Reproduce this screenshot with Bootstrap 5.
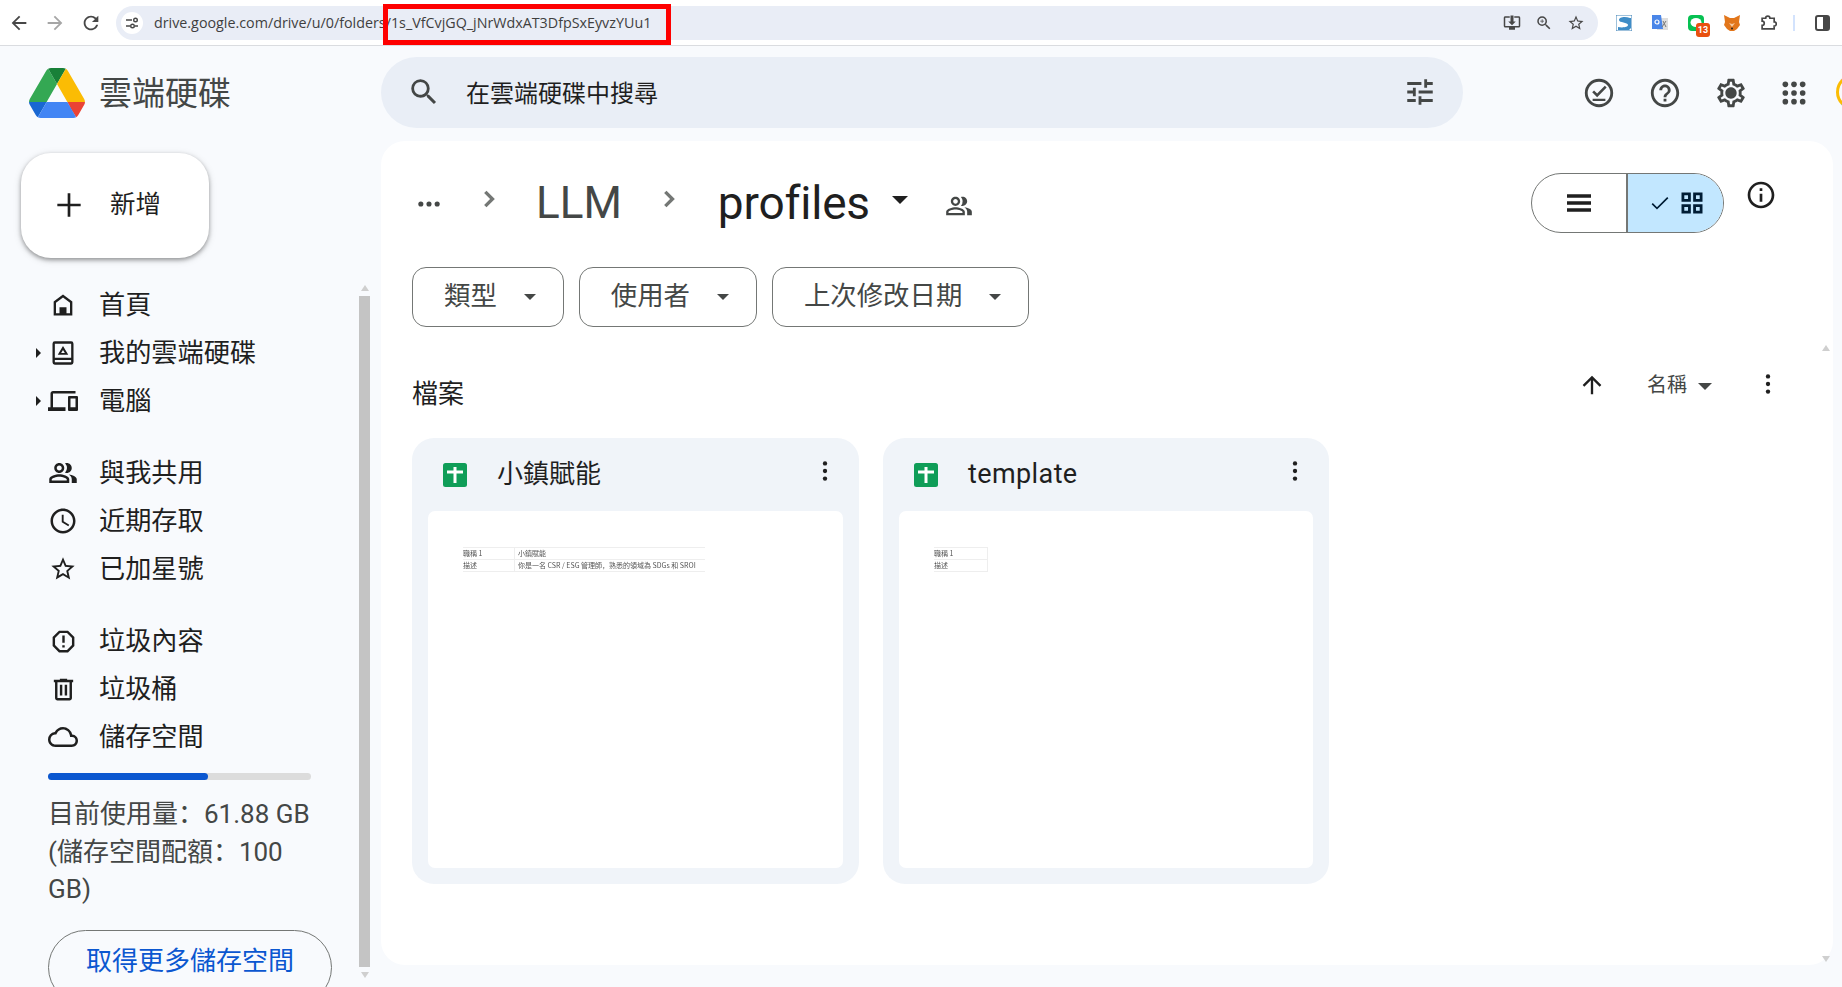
<!DOCTYPE html>
<html lang="en">
<head>
    <meta charset="UTF-8">
    <title>profiles - Google 雲端硬碟</title>
    <link href="https://cdn.jsdelivr.net/npm/bootstrap@5.3.0/dist/css/bootstrap.min.css" rel="stylesheet">
    <style>
        html, body {
            height: 987px;
            overflow: hidden;
        }
        body {
            background-color: #f8fafd;
            color: #1f1f1f;
            font-family: Roboto, "Noto Sans CJK SC", sans-serif;
            font-size: 26px;
        }
        svg {
            display: block;
            flex: none;
            fill: currentColor;
        }
        .chrome-bar {
            height: 46px;
            background: #fff;
            border-bottom: 1px solid #dadce0;
            color: #474747;
        }
        .nav-arrows {
            gap: 14px;
        }
        .arrow-off {
            color: #a6a6a6;
        }
        .omni {
            position: relative;
            width: 1482px;
            height: 34px;
            margin-left: 14px;
            border-radius: 17px;
            background: #e9edf6;
        }
        .omni-site {
            width: 22px;
            height: 22px;
            margin: 0 11px 0 5px;
            border-radius: 50%;
            background: #fff;
        }
        .site-glyph {
            fill: none;
            stroke: #474747;
            stroke-width: 1.4;
        }
        .omni-url {
            font-family: "Open Sans", sans-serif;
            font-size: 14.3px;
            color: #3f3f3f;
            white-space: nowrap;
        }
        .red-frame {
            position: absolute;
            left: 267px;
            top: -2px;
            width: 288px;
            height: 41px;
            border: 5px solid #fe0000;
        }
        .omni-tools {
            gap: 14px;
            margin-right: 13px;
        }
        .ext-row {
            gap: 20px;
            margin-left: 18px;
        }
        .ext-slot {
            position: relative;
            width: 16px;
            height: 16px;
        }
        .ext-badge {
            position: absolute;
            left: 8px;
            top: 8px;
            width: 14px;
            height: 14px;
            border-radius: 3px;
            background: #e8500f;
            color: #fff;
            font-size: 9px;
            font-weight: 700;
            line-height: 14px;
            text-align: center;
        }
        .ext-line {
            fill: #06c152;
        }
        .ext-fox {
            fill: #e2761b;
        }
        .ext-puzzle {
            fill: none;
            stroke: #474747;
            stroke-width: 2.4;
        }
        .ext-sep {
            width: 2px;
            height: 16px;
            margin-left: -4px;
            background: #d3e3fd;
        }
        .ext-plain {
            fill: none;
        }
        .drive-head {
            height: 95px;
            padding-bottom: 3px;
        }
        .brand {
            width: 381px;
            padding-left: 29px;
            color: #444746;
            font-size: 33px;
            gap: 14px;
        }
        .brand-logo {
            margin-top: 1px;
        }
        .brand-name {
            margin-top: 4px;
        }
        .search-box {
            width: 1082px;
            height: 71px;
            padding: 0 26px;
            border-radius: 36px;
            background: #e9eef6;
            font-size: 24px;
            color: #1f1f1f;
        }
        .search-ico {
            color: #444746;
        }
        .search-hint {
            margin: 4px 0 0 25px;
        }
        .head-tools {
            position: relative;
            color: #444746;
        }
        .tool-spot {
            position: absolute;
            top: -16px;
        }
        .tool-task {
            left: 119px;
        }
        .tool-help {
            left: 185px;
        }
        .tool-gear {
            left: 251px;
        }
        .tool-apps {
            left: 318px;
            top: -12px;
        }
        .avatar-ring {
            position: absolute;
            left: 1836px;
            top: 74px;
            width: 36px;
            height: 36px;
            border-radius: 50%;
            border: 3px solid;
            border-color: #ea4335 #34a853 #34a853 #fbbc04;
        }
        .drive-side {
            width: 381px;
        }
        .new-btn {
            width: 188px;
            height: 105px;
            margin: 12px 0 23px 21px;
            gap: 21px;
            padding-left: 28px;
            border: 0;
            border-radius: 30px;
            background: #fff;
            box-shadow: 0 2px 4px rgba(0, 0, 0, .35), 0 2px 8px rgba(0, 0, 0, .12);
            font-size: 25.5px;
            color: #1f1f1f;
        }
        .new-plus {
            margin-top: -1px;
        }
        .new-text {
            margin-top: -3px;
        }
        .side-scroll {
            height: 706px;
            overflow: hidden;
        }
        .side-content {
            width: 359px;
        }
        .side-group {
            margin: 0 0 24px 35px;
            padding: 0;
            list-style: none;
        }
        .side-item {
            height: 48px;
            color: #1f1f1f;
        }
        .side-caret {
            width: 9px;
        }
        .side-ico {
            width: 38px;
        }
        .side-label {
            margin-left: 17px;
            font-size: 26.2px;
            line-height: 1;
        }
        .storage-track {
            width: 263px;
            height: 7px;
            margin: -12px 0 16px 48px;
            border-radius: 4px;
            background: #dcdcdc;
        }
        .storage-fill {
            height: 100%;
            border-radius: 4px;
            background: #0b57d0;
        }
        .storage-text {
            width: 275px;
            margin-left: 48px;
            color: #444746;
            line-height: 37.6px;
        }
        .storage-btn {
            display: block;
            width: 284px;
            height: 75px;
            margin: 21px 0 0 48px;
            padding: 0 0 12px;
            border: 1px solid #747775;
            border-radius: 38px;
            background: transparent;
            color: #0b57d0;
            font-size: 26px;
        }
        .bar-col {
            width: 11px;
            margin-top: 4px;
        }
        .bar-thumb {
            height: 671px;
            margin: 5px 0;
            background: #c4c4c4;
        }
        .bar-up, .bar-down {
            width: 0;
            height: 0;
            border-left: 4px solid transparent;
            border-right: 4px solid transparent;
        }
        .bar-up {
            border-bottom: 6px solid #cfcfcf;
        }
        .bar-down {
            border-top: 6px solid #cfcfcf;
        }
        .drive-main {
            position: relative;
            width: 1452px;
            height: 824px;
            padding: 32px 0 0 31px;
            border-radius: 24px;
            background: #fff;
        }
        .panel-arrow {
            position: absolute;
            left: 1441px;
        }
        .panel-arrow.bar-up {
            top: 204px;
        }
        .panel-arrow.bar-down {
            top: 815px;
        }
        .crumb-row {
            height: 60px;
        }
        .crumb-dots {
            margin: 2px 0 0 3px;
            color: #444746;
        }
        .crumb-link {
            margin-left: 34px;
            font-size: 44px;
            line-height: 1;
            color: #444746;
        }
        .crumb-now {
            margin-left: 36px;
            font-size: 46px;
            line-height: 1;
            letter-spacing: -.2px;
            color: #1f1f1f;
        }
        .crumb-sep {
            margin: -8px 0 0 33px;
            color: #747775;
        }
        .crumb-sep.second {
            margin-left: 34px;
        }
        .crumb-tri {
            margin: -6px 0 0 22px;
            border-left-width: 8px !important;
            border-right-width: 8px !important;
            border-top-width: 8px !important;
            border-top-color: #1f1f1f !important;
        }
        .crumb-people {
            margin: 6px 0 0 37px;
            color: #444746;
        }
        .view-wrap {
            margin-right: 56px;
        }
        .view-switch {
            width: 193px;
            height: 60px;
            border: 1px solid #747775;
            border-radius: 30px;
            overflow: hidden;
        }
        .view-list {
            width: 96px;
            border-right: 2px solid #747775;
        }
        .view-grid {
            flex: 1;
            gap: 6px;
            padding-left: 2px;
            background: #c2e7ff;
            color: #001d35;
        }
        .view-info {
            margin: 6px 0 0 21px;
        }
        .chip-row {
            gap: 15px;
            margin-top: 34px;
        }
        .filter-chip {
            height: 60px;
            padding: 0 27px 0 31px;
            gap: 27px;
            border: 1px solid #747775;
            border-radius: 14px;
            background: #fff;
            color: #444746;
            font-size: 26.4px;
        }
        .filter-chip:hover {
            background: #fff;
            color: #444746;
            border-color: #747775;
        }
        .tri {
            width: 0;
            height: 0;
            border-left: 6px solid transparent;
            border-right: 6px solid transparent;
            border-top: 6px solid #444746;
        }
        .file-head {
            height: 50px;
            margin-top: 33px;
        }
        .file-caption {
            margin-top: 18px;
        }
        .sort-tools {
            margin-right: 52px;
            color: #444746;
            font-size: 20px;
        }
        .sort-up {
            color: #1f1f1f;
        }
        .sort-name {
            margin-left: 41px;
        }
        .sort-tri {
            margin: 3px 0 0 11px;
            border-left-width: 7px;
            border-right-width: 7px;
            border-top-width: 7px;
        }
        .sort-more {
            margin: -2px 0 0 43px;
            color: #1f1f1f;
        }
        .file-grid {
            display: grid;
            grid-template-columns: 447px 446px;
            gap: 24px;
            margin-top: 28px;
        }
        .file-tile {
            height: 446px;
            padding: 0 16px 16px;
            border-radius: 22px;
            background: #f0f4f9;
        }
        .tile-title {
            height: 73px;
            padding-left: 15px;
            gap: 30px;
        }
        .tile-name {
            flex: 1;
            margin-top: 0;
            line-height: 1;
            letter-spacing: .4px;
            font-size: 27px;
        }
        .tile-name.cjk {
            margin-top: -2px;
            letter-spacing: 0;
            font-size: 26px;
        }
        .tile-more {
            margin: -7px 5px 0 0;
        }
        .tile-thumb {
            height: 357px;
            padding: 36px 35px;
            border-radius: 7px;
            background: #fff;
        }
        .mini-sheet {
            width: 242px;
            font-family: "Noto Sans CJK SC", sans-serif;
            font-size: 7px;
            line-height: 11px;
            color: #555;
            border-top: 1px solid #eee;
            filter: blur(.5px);
            white-space: nowrap;
        }
        .mini-sheet.thin {
            width: 54px;
            border-right: 1px solid #eee;
        }
        .mini-line {
            border-bottom: 1px solid #eee;
        }
        .mini-key {
            width: 52px;
            border-right: 1px solid #eee;
        }
        .thin .mini-key {
            border-right: 0;
        }
        .mini-val {
            padding-left: 3px;
        }
    </style>
</head>
<body>
    <div class="chrome-bar d-flex align-items-center ps-2">
        <div class="nav-arrows d-flex align-items-center">
            <svg width="22" height="22" viewBox="0 0 24 24"><path d="M20 11H7.83l5.59-5.59L12 4l-8 8 8 8 1.41-1.41L7.83 13H20v-2z"/></svg>
            <svg class="arrow-off" width="22" height="22" viewBox="0 0 24 24"><path d="M12 4l-1.41 1.41L16.17 11H4v2h12.17l-5.58 5.59L12 20l8-8z"/></svg>
            <svg width="22" height="22" viewBox="0 0 24 24"><path d="M17.65 6.35A7.958 7.958 0 0 0 12 4c-4.42 0-7.99 3.58-7.99 8s3.57 8 7.99 8c3.73 0 6.84-2.55 7.73-6h-2.08A5.99 5.99 0 0 1 12 18c-3.31 0-6-2.69-6-6s2.69-6 6-6c1.66 0 3.14.69 4.22 1.78L13 11h7V4l-2.35 2.35z"/></svg>
        </div>
        <div class="omni d-flex align-items-center">
            <div class="omni-site d-flex align-items-center justify-content-center">
                <svg class="site-glyph" width="14" height="14" viewBox="0 0 14 14"><path d="M1 4h6M10 10H13M1 10h4"/><circle cx="10.5" cy="4" r="1.8"/><circle cx="7.5" cy="10" r="1.8"/></svg>
            </div>
            <span class="omni-url">drive.google.com/drive/u/0/folders/1s_VfCvjGQ_jNrWdxAT3DfpSxEyvzYUu1</span>
            <div class="red-frame"></div>
            <div class="omni-tools d-flex align-items-center ms-auto">
                <svg width="18" height="18" viewBox="0 0 24 24"><path d="M21 3h-6v2h6v11H3V5h6V3H3c-1.1 0-2 .9-2 2v11c0 1.1.9 2 2 2h5v3h8v-3h5c1.1 0 2-.9 2-2V5c0-1.1-.9-2-2-2zm-9 12 5-5h-3V2h-4v8H7l5 5z"/></svg>
                <svg width="18" height="18" viewBox="0 0 24 24"><path d="M15.5 14h-.79l-.28-.27A6.471 6.471 0 0 0 16 9.5 6.5 6.5 0 1 0 9.5 16c1.61 0 3.09-.59 4.23-1.57l.27.28v.79l5 4.99L20.49 19l-4.99-5zm-6 0C7.01 14 5 11.99 5 9.5S7.01 5 9.5 5 14 7.01 14 9.5 11.99 14 9.5 14z"/><path d="M12 10h-2v2H9v-2H7V9h2V7h1v2h2z"/></svg>
                <svg width="18" height="18" viewBox="0 0 24 24"><path d="M22 9.24l-7.19-.62L12 2 9.19 8.63 2 9.24l5.46 4.73L5.82 21 12 17.27 18.18 21l-1.63-7.03L22 9.24zM12 15.4l-3.76 2.27 1-4.28-3.32-2.88 4.38-.38L12 6.1l1.71 4.04 4.38.38-3.32 2.88 1 4.28L12 15.4z"/></svg>
            </div>
        </div>
        <div class="ext-row d-flex align-items-center">
            <svg class="ext-plain" width="16" height="16" viewBox="0 0 16 16"><rect width="16" height="16" fill="#fff" stroke="#3f83b8"/><path d="M14 3C9 1 3 2 3 5c0 3 9 2 9 5 0 2-5 3-10 2v3h11l2-2V3z" fill="#3f8dc7"/></svg>
            <svg class="ext-plain" width="16" height="16" viewBox="0 0 16 16"><rect x="5" y="3" width="11" height="12" fill="#dedede"/><path d="M0 0h9l2 14H0z" fill="#4a86e8"/><circle cx="5" cy="7" r="2" fill="none" stroke="#fff" stroke-width="1.2"/><path d="M11 6l3 6M14 6l-4 6" stroke="#777"/></svg>
            <div class="ext-slot">
                <svg class="ext-line" width="16" height="16" viewBox="0 0 16 16"><rect width="16" height="16" rx="4"/><ellipse cx="8" cy="7.5" rx="5.5" ry="4.5" fill="#fff"/></svg>
                <span class="ext-badge">13</span>
            </div>
            <svg class="ext-fox" width="16" height="16" viewBox="0 0 16 16"><path d="M0 0l6 3h4l6-3-1 7 1 3-3 4-3 2H6l-3-2-3-4 1-3z"/><path d="M5 8l3 4 3-4-3 1z" fill="#f6c89f"/><circle cx="8" cy="13.5" r="1" fill="#222"/></svg>
            <svg class="ext-puzzle" width="17" height="17" viewBox="0 0 24 24"><path d="M3 6h5a3 3 0 0 1 6 0h6v5a3 3 0 0 1 0 6v4H3v-5a3 3 0 0 0 0-6z"/></svg>
            <div class="ext-sep"></div>
            <svg class="ext-plain" width="15" height="16" viewBox="0 0 15 16"><rect x="1" y="1" width="13" height="14" rx="2" stroke="#474747" stroke-width="2"/><rect x="8" y="1" width="6" height="14" fill="#474747"/></svg>
        </div>
    </div>

    <div class="avatar-ring"></div>

    <div class="drive-head d-flex align-items-center">
        <div class="brand d-flex align-items-center">
            <svg class="brand-logo" width="56" height="50" viewBox="0 0 87.3 78">
                <path d="m6.6 66.85 3.85 6.65c.8 1.4 1.95 2.5 3.3 3.3l13.75-23.8h-27.5c0 1.55.4 3.1 1.2 4.5z" fill="#1967d2"/>
                <path d="m43.65 25-13.75-23.8c-1.35.8-2.5 1.9-3.3 3.3l-25.4 44a9.06 9.06 0 0 0 -1.2 4.5h27.5z" fill="#34a853"/>
                <path d="m73.55 76.8c1.35-.8 2.5-1.9 3.3-3.3l1.6-2.75 7.65-13.25c.8-1.4 1.2-2.95 1.2-4.5h-27.502l5.852 11.5z" fill="#ea4335"/>
                <path d="m43.65 25 13.75-23.8c-1.35-.8-2.9-1.2-4.5-1.2h-18.5c-1.6 0-3.15.45-4.5 1.2z" fill="#188038"/>
                <path d="m59.8 53h-32.3l-13.75 23.8c1.35.8 2.9 1.2 4.5 1.2h50.8c1.6 0 3.15-.45 4.5-1.2z" fill="#4285f4"/>
                <path d="m73.4 26.5-12.7-22c-.8-1.4-1.95-2.5-3.3-3.3l-13.75 23.8 16.15 28h27.45c0-1.55-.4-3.1-1.2-4.5z" fill="#fbbc04"/>
            </svg>
            <span class="brand-name">雲端硬碟</span>
        </div>
        <div class="search-box d-flex align-items-center">
            <svg class="search-ico" width="34" height="34" viewBox="0 0 24 24"><path d="M15.5 14h-.79l-.28-.27A6.471 6.471 0 0 0 16 9.5 6.5 6.5 0 1 0 9.5 16c1.61 0 3.09-.59 4.23-1.57l.27.28v.79l5 4.99L20.49 19l-4.99-5zm-6 0C7.01 14 5 11.99 5 9.5S7.01 5 9.5 5 14 7.01 14 9.5 11.99 14 9.5 14z"/></svg>
            <span class="search-hint">在雲端硬碟中搜尋</span>
            <svg class="search-ico ms-auto" width="34" height="34" viewBox="0 0 24 24"><path d="M3 17v2h6v-2H3zM3 5v2h10V5H3zm10 16v-2h8v-2h-8v-2h-2v6h2zM7 9v2H3v2h4v2h2V9H7zm14 4v-2H11v2h10zm-6-4h2V7h4V5h-4V3h-2v6z"/></svg>
        </div>
        <div class="head-tools flex-grow-1">
            <svg class="tool-spot tool-task" width="34" height="34" viewBox="0 0 24 24"><path d="M12 2a10 10 0 1 0 0 20 10 10 0 0 0 0-20zm0 18a8 8 0 1 1 0-16 8 8 0 0 1 0 16z"/><path d="M17.4 8.2l-1.3-1.3-5.4 5.5-2.2-2.2-1.3 1.3 3.5 3.5zM7.5 16h9v1.6h-9z"/></svg>
            <svg class="tool-spot tool-help" width="34" height="34" viewBox="0 0 24 24"><path d="M11 18h2v-2h-2v2zm1-16C6.48 2 2 6.48 2 12s4.48 10 10 10 10-4.48 10-10S17.52 2 12 2zm0 18c-4.41 0-8-3.59-8-8s3.59-8 8-8 8 3.59 8 8-3.59 8-8 8zm0-14c-2.21 0-4 1.79-4 4h2c0-1.1.9-2 2-2s2 .9 2 2c0 2-3 1.75-3 5h2c0-2.25 3-2.5 3-5 0-2.21-1.79-4-4-4z"/></svg>
            <svg class="tool-spot tool-gear" width="34" height="34" viewBox="0 0 24 24"><path d="M19.43 12.98c.04-.32.07-.64.07-.98 0-.34-.03-.66-.07-.98l2.11-1.65c.19-.15.24-.42.12-.64l-2-3.46a.5.5 0 0 0-.61-.22l-2.49 1c-.52-.4-1.08-.73-1.69-.98l-.38-2.65A.488.488 0 0 0 14 2h-4c-.25 0-.46.18-.49.42l-.38 2.65c-.61.25-1.17.59-1.69.98l-2.49-1a.566.566 0 0 0-.18-.03c-.17 0-.34.09-.43.25l-2 3.46c-.13.22-.07.49.12.64l2.11 1.65c-.04.32-.07.65-.07.98 0 .33.03.66.07.98l-2.11 1.65c-.19.15-.24.42-.12.64l2 3.46a.5.5 0 0 0 .61.22l2.49-1c.52.4 1.08.73 1.69.98l.38 2.65c.03.24.24.42.49.42h4c.25 0 .46-.18.49-.42l.38-2.65c.61-.25 1.17-.59 1.69-.98l2.49 1c.06.02.12.03.18.03.17 0 .34-.09.43-.25l2-3.46c.12-.22.07-.49-.12-.64l-2.11-1.65zm-1.98-1.71c.04.31.05.52.05.73 0 .21-.02.43-.05.73l-.14 1.13.89.7 1.08.84-.7 1.21-1.27-.51-1.04-.42-.9.68c-.43.32-.84.56-1.25.73l-1.06.43-.16 1.13-.2 1.35h-1.4l-.19-1.35-.16-1.13-1.06-.43c-.43-.18-.83-.41-1.23-.71l-.91-.7-1.06.43-1.27.51-.7-1.21 1.08-.84.89-.7-.14-1.13c-.03-.31-.05-.54-.05-.74s.02-.43.05-.73l.14-1.13-.89-.7-1.08-.84.7-1.21 1.27.51 1.04.42.9-.68c.43-.32.84-.56 1.25-.73l1.06-.43.16-1.13.2-1.35h1.39l.19 1.35.16 1.13 1.06.43c.43.18.83.41 1.23.71l.91.7 1.06-.43 1.27-.51.7 1.21-1.07.85-.89.7.14 1.13zM12 8c-2.21 0-4 1.79-4 4s1.79 4 4 4 4-1.79 4-4-1.79-4-4-4z"/></svg>
            <svg class="tool-spot tool-apps" width="26" height="26" viewBox="0 0 24 24"><circle cx="4" cy="4" r="2.6"/><circle cx="12" cy="4" r="2.6"/><circle cx="20" cy="4" r="2.6"/><circle cx="4" cy="12" r="2.6"/><circle cx="12" cy="12" r="2.6"/><circle cx="20" cy="12" r="2.6"/><circle cx="4" cy="20" r="2.6"/><circle cx="12" cy="20" r="2.6"/><circle cx="20" cy="20" r="2.6"/></svg>
        </div>
    </div>

    <div class="d-flex">
        <aside class="drive-side">
            <button class="new-btn d-flex align-items-center">
                <svg class="new-plus" width="40" height="40" viewBox="0 0 24 24"><path d="M19 12.8h-6.2V19h-1.6v-6.2H5v-1.6h6.2V5h1.6v6.2H19z"/></svg>
                <span class="new-text">新增</span>
            </button>
            <div class="side-scroll d-flex">
                <div class="side-content">
                    <ul class="side-group">
                        <li class="side-item d-flex align-items-center">
                            <span class="side-caret"></span>
                            <span class="side-ico d-flex justify-content-center"><svg width="28" height="28" viewBox="0 0 24 24"><path d="M12 3 4 9v12h16V9l-8-6zm6 16h-3v-5H9v5H6v-9l6-4.5 6 4.5v9z"/><path d="M10 15h4v5h-4z"/></svg></span>
                            <span class="side-label">首頁</span>
                        </li>
                        <li class="side-item d-flex align-items-center">
                            <span class="side-caret"><svg width="6" height="10" viewBox="0 0 6 10"><path d="M1 0l5 5-5 5z"/></svg></span>
                            <span class="side-ico d-flex justify-content-center"><svg width="28" height="28" viewBox="0 0 24 24"><path d="M19 2H5a2 2 0 0 0-2 2v16a2 2 0 0 0 2 2h14a2 2 0 0 0 2-2V4a2 2 0 0 0-2-2zm0 14H5V4h14v12zM5 18h14v2H5z"/><path d="M12 6l-4.5 7.5h9zm0 3.4 1.6 2.6h-3.2z"/></svg></span>
                            <span class="side-label">我的雲端硬碟</span>
                        </li>
                        <li class="side-item d-flex align-items-center">
                            <span class="side-caret"><svg width="6" height="10" viewBox="0 0 6 10"><path d="M1 0l5 5-5 5z"/></svg></span>
                            <span class="side-ico d-flex justify-content-center"><svg width="30" height="30" viewBox="0 0 24 24"><path d="M4 6h18V4H4c-1.1 0-2 .9-2 2v11H0v3h14v-3H4V6zm19 2h-6c-.55 0-1 .45-1 1v10c0 .55.45 1 1 1h6c.55 0 1-.45 1-1V9c0-.55-.45-1-1-1zm-1 9h-4v-7h4v7z"/></svg></span>
                            <span class="side-label">電腦</span>
                        </li>
                    </ul>
                    <ul class="side-group">
                        <li class="side-item d-flex align-items-center">
                            <span class="side-caret"></span>
                            <span class="side-ico d-flex justify-content-center"><svg width="30" height="30" viewBox="0 0 24 24"><path d="M16.67 13.13C18.04 14.06 19 15.32 19 17v3h4v-3c0-2.18-3.57-3.47-6.33-3.87zM15 12c2.21 0 4-1.79 4-4s-1.79-4-4-4c-.47 0-.91.1-1.33.24a5.98 5.98 0 0 1 0 7.52c.42.14.86.24 1.33.24zM9 12c2.21 0 4-1.79 4-4s-1.79-4-4-4-4 1.79-4 4 1.79 4 4 4zm0-6c1.1 0 2 .9 2 2s-.9 2-2 2-2-.9-2-2 .9-2 2-2zM9 13c-2.67 0-8 1.34-8 4v3h16v-3c0-2.66-5.33-4-8-4zm6 5H3v-.99C3.2 16.29 6.3 15 9 15s5.8 1.29 6 2V18z"/></svg></span>
                            <span class="side-label">與我共用</span>
                        </li>
                        <li class="side-item d-flex align-items-center">
                            <span class="side-caret"></span>
                            <span class="side-ico d-flex justify-content-center"><svg width="30" height="30" viewBox="0 0 24 24"><path d="M11.99 2C6.47 2 2 6.48 2 12s4.47 10 9.99 10C17.52 22 22 17.52 22 12S17.52 2 11.99 2zM12 20c-4.42 0-8-3.58-8-8s3.58-8 8-8 8 3.58 8 8-3.58 8-8 8zm.5-13H11v6l5.25 3.15.75-1.23-4.5-2.67z"/></svg></span>
                            <span class="side-label">近期存取</span>
                        </li>
                        <li class="side-item d-flex align-items-center">
                            <span class="side-caret"></span>
                            <span class="side-ico d-flex justify-content-center"><svg width="28" height="28" viewBox="0 0 24 24"><path d="M22 9.24l-7.19-.62L12 2 9.19 8.63 2 9.24l5.46 4.73L5.82 21 12 17.27 18.18 21l-1.63-7.03L22 9.24zM12 15.4l-3.76 2.27 1-4.28-3.32-2.88 4.38-.38L12 6.1l1.71 4.04 4.38.38-3.32 2.88 1 4.28L12 15.4z"/></svg></span>
                            <span class="side-label">已加星號</span>
                        </li>
                    </ul>
                    <ul class="side-group">
                        <li class="side-item d-flex align-items-center">
                            <span class="side-caret"></span>
                            <span class="side-ico d-flex justify-content-center"><svg width="29" height="29" viewBox="0 0 24 24"><path d="M15.73 3H8.27L3 8.27v7.46L8.27 21h7.46L21 15.73V8.27L15.73 3zM19 14.9L14.9 19H9.1L5 14.9V9.1L9.1 5h5.8L19 9.1v5.8z"/><path d="M11 7h2v6h-2zm0 8h2v2h-2z"/></svg></span>
                            <span class="side-label">垃圾內容</span>
                        </li>
                        <li class="side-item d-flex align-items-center">
                            <span class="side-caret"></span>
                            <span class="side-ico d-flex justify-content-center"><svg width="29" height="29" viewBox="0 0 24 24"><path d="M15 4V3H9v1H4v2h1v13c0 1.1.9 2 2 2h10c1.1 0 2-.9 2-2V6h1V4h-5zm2 15H7V6h10v13zM9 8h2v9H9zm4 0h2v9h-2z"/></svg></span>
                            <span class="side-label">垃圾桶</span>
                        </li>
                        <li class="side-item d-flex align-items-center">
                            <span class="side-caret"></span>
                            <span class="side-ico d-flex justify-content-center"><svg width="30" height="30" viewBox="0 0 24 24"><path d="M19.35 10.04A7.49 7.49 0 0 0 12 4C9.11 4 6.6 5.64 5.35 8.04A5.994 5.994 0 0 0 0 14c0 3.31 2.69 6 6 6h13c2.76 0 5-2.24 5-5 0-2.64-2.05-4.78-4.65-4.96zM19 18H6c-2.21 0-4-1.79-4-4 0-2.05 1.53-3.76 3.56-3.97l1.07-.11.5-.95A5.469 5.469 0 0 1 12 6c2.62 0 4.88 1.86 5.39 4.43l.3 1.5 1.53.11A2.98 2.98 0 0 1 22 15c0 1.65-1.35 3-3 3z"/></svg></span>
                            <span class="side-label">儲存空間</span>
                        </li>
                    </ul>
                    <div class="storage-track"><div class="storage-fill" style="width: 60.8%"></div></div>
                    <div class="storage-text">目前使用量：61.88 GB (儲存空間配額：100 GB)</div>
                    <button class="storage-btn">取得更多儲存空間</button>
                </div>
                <div class="bar-col">
                    <div class="bar-up mx-auto"></div>
                    <div class="bar-thumb"></div>
                    <div class="bar-down mx-auto"></div>
                </div>
            </div>
        </aside>

        <main class="drive-main">
            <div class="bar-up panel-arrow"></div>
            <div class="bar-down panel-arrow"></div>
            <div class="crumb-row d-flex justify-content-between">
                <div class="d-flex align-items-center">
                    <svg class="crumb-dots" width="28" height="28" viewBox="0 0 24 24"><circle cx="5" cy="12" r="2.2"/><circle cx="12" cy="12" r="2.2"/><circle cx="19" cy="12" r="2.2"/></svg>
                    <svg class="crumb-sep" width="26" height="26" viewBox="0 0 24 24"><path d="M7.5 6.5 9.7 4.3 17.4 12l-7.7 7.7-2.2-2.2L13 12z"/></svg>
                    <span class="crumb-link">LLM</span>
                    <svg class="crumb-sep second" width="26" height="26" viewBox="0 0 24 24"><path d="M7.5 6.5 9.7 4.3 17.4 12l-7.7 7.7-2.2-2.2L13 12z"/></svg>
                    <span class="crumb-now">profiles</span>
                    <span class="tri crumb-tri"></span>
                    <svg class="crumb-people" width="28" height="28" viewBox="0 0 24 24"><path d="M16.67 13.13C18.04 14.06 19 15.32 19 17v3h4v-3c0-2.18-3.57-3.47-6.33-3.87zM15 12c2.21 0 4-1.79 4-4s-1.79-4-4-4c-.47 0-.91.1-1.33.24a5.98 5.98 0 0 1 0 7.52c.42.14.86.24 1.33.24zM9 12c2.21 0 4-1.79 4-4s-1.79-4-4-4-4 1.79-4 4 1.79 4 4 4zm0-6c1.1 0 2 .9 2 2s-.9 2-2 2-2-.9-2-2 .9-2 2-2zM9 13c-2.67 0-8 1.34-8 4v3h16v-3c0-2.66-5.33-4-8-4zm6 5H3v-.99C3.2 16.29 6.3 15 9 15s5.8 1.29 6 2V18z"/></svg>
                </div>
                <div class="view-wrap d-flex">
                    <div class="view-switch d-flex">
                        <div class="view-list d-flex align-items-center justify-content-center">
                            <svg width="32" height="32" viewBox="0 0 24 24"><path d="M3 5.5h18v2.6H3zM3 10.7h18v2.6H3zM3 15.9h18v2.6H3z"/></svg>
                        </div>
                        <div class="view-grid d-flex align-items-center justify-content-center">
                            <svg width="24" height="24" viewBox="0 0 24 24"><path d="M9 16.2 4.8 12l-1.2 1.2L9 18.6 20.4 7.2 19.2 6z"/></svg>
                            <svg width="28" height="28" viewBox="0 0 24 24"><path fill-rule="evenodd" d="M3 3h8v8H3zm2.4 2.4v3.2h3.2V5.4zM13 3h8v8h-8zm2.4 2.4v3.2h3.2V5.4zM3 13h8v8H3zm2.4 2.4v3.2h3.2v-3.2zM13 13h8v8h-8zm2.4 2.4v3.2h3.2v-3.2z"/></svg>
                        </div>
                    </div>
                    <svg class="view-info" width="32" height="32" viewBox="0 0 24 24"><path d="M11 7h2v2h-2zm0 4h2v6h-2zm1-9C6.48 2 2 6.48 2 12s4.48 10 10 10 10-4.48 10-10S17.52 2 12 2zm0 18c-4.41 0-8-3.59-8-8s3.59-8 8-8 8 3.59 8 8-3.59 8-8 8z"/></svg>
                </div>
            </div>

            <div class="chip-row d-flex">
                <button class="btn filter-chip d-flex align-items-center"><span>類型</span><span class="tri"></span></button>
                <button class="btn filter-chip d-flex align-items-center"><span>使用者</span><span class="tri"></span></button>
                <button class="btn filter-chip d-flex align-items-center"><span>上次修改日期</span><span class="tri"></span></button>
            </div>

            <div class="file-head d-flex align-items-center justify-content-between">
                <span class="file-caption">檔案</span>
                <div class="sort-tools d-flex align-items-center">
                    <svg class="sort-up" width="28" height="28" viewBox="0 0 24 24"><path d="M4 12l1.41 1.41L11 7.83V20h2V7.83l5.58 5.59L20 12l-8-8z"/></svg>
                    <span class="sort-name">名稱</span>
                    <span class="tri sort-tri"></span>
                    <svg class="sort-more" width="26" height="26" viewBox="0 0 24 24"><circle cx="12" cy="5" r="2"/><circle cx="12" cy="12" r="2"/><circle cx="12" cy="19" r="2"/></svg>
                </div>
            </div>

            <div class="file-grid">
                <div class="file-tile">
                    <div class="tile-title d-flex align-items-center">
                        <svg width="24" height="24" viewBox="0 0 24 24"><rect width="24" height="24" rx="2.5" fill="#0f9d58"/><path d="M10.5 4h3v3.5H20v3h-6.5V20h-3v-9.5H4v-3h6.5z" fill="#fff"/></svg>
                        <span class="tile-name cjk">小鎮賦能</span>
                        <svg class="tile-more" width="26" height="26" viewBox="0 0 24 24"><circle cx="12" cy="5" r="2"/><circle cx="12" cy="12" r="2"/><circle cx="12" cy="19" r="2"/></svg>
                    </div>
                    <div class="tile-thumb">
                        <div class="mini-sheet">
                            <div class="mini-line d-flex"><span class="mini-key">職稱 1</span><span class="mini-val">小鎮賦能</span></div>
                            <div class="mini-line d-flex"><span class="mini-key">描述</span><span class="mini-val">你是一名 CSR / ESG 管理師，熟悉的領域為 SDGs 和 SROI</span></div>
                        </div>
                    </div>
                </div>
                <div class="file-tile">
                    <div class="tile-title d-flex align-items-center">
                        <svg width="24" height="24" viewBox="0 0 24 24"><rect width="24" height="24" rx="2.5" fill="#0f9d58"/><path d="M10.5 4h3v3.5H20v3h-6.5V20h-3v-9.5H4v-3h6.5z" fill="#fff"/></svg>
                        <span class="tile-name">template</span>
                        <svg class="tile-more" width="26" height="26" viewBox="0 0 24 24"><circle cx="12" cy="5" r="2"/><circle cx="12" cy="12" r="2"/><circle cx="12" cy="19" r="2"/></svg>
                    </div>
                    <div class="tile-thumb">
                        <div class="mini-sheet thin">
                            <div class="mini-line d-flex"><span class="mini-key">職稱 1</span></div>
                            <div class="mini-line d-flex"><span class="mini-key">描述</span></div>
                        </div>
                    </div>
                </div>
            </div>
        </main>
    </div>

    <script src="https://cdn.jsdelivr.net/npm/bootstrap@5.3.0/dist/js/bootstrap.bundle.min.js"></script>
</body>
</html>
